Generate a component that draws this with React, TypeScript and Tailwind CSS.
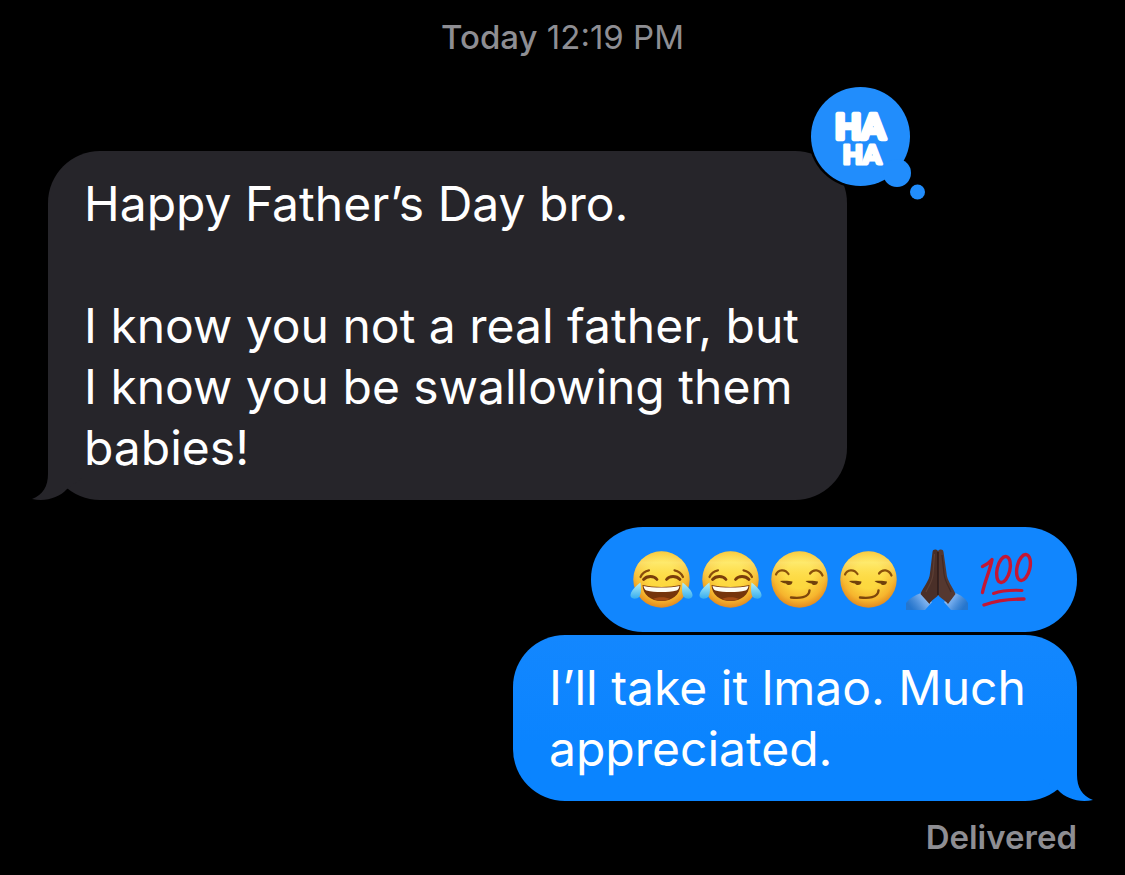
import type { ReactNode } from 'react';
import clsx from 'clsx';

interface BubbleProps {
  side: 'left' | 'right';
  tail?: boolean;
  className?: string;
  children: ReactNode;
}

function Bubble({ side, tail = false, className, children }: BubbleProps) {
  return (
    <div
      className={clsx(
        'relative max-w-full rounded-[52px] px-9 py-[22px] text-5xl leading-[61px] whitespace-pre-line',
        side === 'left' ? 'self-start bg-[#26252a] text-[#26252a]' : 'self-end bg-[#1186fe] text-[#0a84ff]',
        className
      )}
    >
      {tail && (
        <svg
          aria-hidden="true"
          viewBox="0 0 52 56"
          className={clsx('absolute bottom-0 w-[52px] h-14', side === 'left' ? '-left-4' : '-right-4 -scale-x-100')}
        >
          <path d="M16 0V30C16 42 11 51 0 55C13 58 27 54 35 45L50 34V0Z" fill="currentColor" />
        </svg>
      )}
      <div className="relative text-white">{children}</div>
    </div>
  );
}

/* Blue "ha ha" reaction that hangs over the bubble's corner */
function HahaTapback() {
  return (
    <svg
      role="img"
      aria-label="Laughed"
      viewBox="0 0 125 124"
      className="absolute -top-[70px] -right-[83px] w-[125px] h-[124px]"
    >
      <g fill="#000">
        <circle cx="55.5" cy="55.5" r="52" />
        <circle cx="92" cy="92" r="16" />
        <circle cx="112.5" cy="111" r="9" />
      </g>
      <g fill="#218dfc">
        <circle cx="55.5" cy="55.5" r="49.5" />
        <circle cx="92" cy="92" r="14" />
        <circle cx="112.5" cy="111" r="7.5" />
      </g>
      <g
        fill="#fff"
        stroke="#fff"
        strokeLinejoin="round"
        textAnchor="middle"
        className="font-[Lato] font-black"
      >
        <text x="55" y="58" fontSize="34" strokeWidth="4.4">HA</text>
        <text x="57" y="83" fontSize="26" strokeWidth="3.2">HA</text>
      </g>
    </svg>
  );
}

const emojiClass = 'w-[69px] h-[61px]';

function Face({ children, label }: { children: ReactNode; label: string }) {
  return (
    <svg role="img" aria-label={label} viewBox="0 0 69 61" className={emojiClass}>
      <circle cx="34.5" cy="30.5" r="28.2" fill="url(#faceEdge)" />
      <circle cx="34.5" cy="30.5" r="28.2" fill="url(#faceShine)" />
      {children}
    </svg>
  );
}

function JoyEmoji() {
  return (
    <Face label="Face with tears of joy">
      <g fill="none" stroke="#8a4d0c" strokeWidth="2.2" strokeLinecap="round">
        <path d="M13.5 28C15 24.5 18 22 22 21.3" />
        <path d="M47.5 21.3C51.5 22 54.5 24.5 56 28" />
      </g>
      <g fill="none" stroke="#7a3d0a" strokeWidth="2.8" strokeLinecap="round">
        <path d="M16.5 30.5C20 26.5 27 26.5 30 30.5" />
        <path d="M39.5 30.5C42.5 26.5 49.5 26.5 53 30.5" />
      </g>
      <path d="M15.5 36C26 38.5 43 38.5 53.5 36C53 46 45 52 34.5 52S16 46 15.5 36Z" fill="#76350b" />
      <path d="M16.5 37C26 39 43 39 52.5 37C52 39.5 51 41 49.5 41.5C41 43.5 28 43.5 19.5 41.5C18 41 17 39.5 16.5 37Z" fill="#fffdf2" />
      <path d="M26 50C30 47.5 39 47.5 43 50C38 52.3 31 52.3 26 50Z" fill="#a44c14" />
      <path d="M13.5 33.5C8 37.5 3 43 3.5 47C4.5 50.5 10 50.5 12.5 47.5C14.5 44 14 38 13.5 33.5Z" fill="url(#tear)" />
      <path d="M55.5 33.5C61 37.5 66 43 65.5 47C64.5 50.5 59 50.5 56.5 47.5C54.5 44 55 38 55.5 33.5Z" fill="url(#tear)" />
    </Face>
  );
}

function SmirkEmoji() {
  return (
    <Face label="Smirking face">
      <g fill="none" stroke="#8a510b" strokeWidth="2.2" strokeLinecap="round">
        <path d="M11 25.5C13 20.5 20 19.5 23.5 25" />
        <path d="M45 24.5C48.5 19.5 55 20.5 57.5 26.5" />
      </g>
      <g fill="#70400b">
        <path d="M15 32C19 31.5 24 31.5 27.5 32.5C27.5 36 23 37.5 21 34.5C19 34.5 16.5 33.5 15 32Z" />
        <path d="M40.5 32C44.5 31.5 49.5 31.5 53 32.5C53 36 48.5 37.5 46.5 34.5C44.5 34.5 42 33.5 40.5 32Z" />
      </g>
      <path d="M26 48.5C34 49.5 44 49 44.5 41.5" fill="none" stroke="#7d460b" strokeWidth="2.4" strokeLinecap="round" />
    </Face>
  );
}

function PrayEmoji() {
  return (
    <svg role="img" aria-label="Folded hands" viewBox="0 0 69 61" className={emojiClass}>
      <path d="M18 44C12 46 7 49 3 54V61H22L29 53Z" fill="url(#sleeveLeft)" />
      <path d="M52 44C58 46 62 49 65 54V61H48L41 53Z" fill="url(#sleeveRight)" />
      <path d="M35 2C33 0 30 0 29.5 3L27 24C26.5 32 20 38 17.5 45L26.5 55C28 51 33 49.5 35.2 46Z" fill="#4a2f28" />
      <path d="M35 2C37 0 40 0 40.5 3L43.5 24C44 32 50 38 52.5 45L45 55C42 51 37.5 49.5 35.2 46Z" fill="#553830" />
      <path d="M35 3V46" stroke="#2b1815" strokeWidth="1.4" />
      <path d="M31.5 5L30 25C29.5 33 25 38 23 43" fill="none" stroke="#5d3f35" strokeWidth="1.2" />
      <path d="M39 6L41 25C42 33 46 38 48 43" fill="none" stroke="#432a24" strokeWidth="1.2" />
    </svg>
  );
}

function HundredEmoji() {
  return (
    <svg role="img" aria-label="Hundred points" viewBox="0 0 69 61" className={emojiClass}>
      <g fill="none" stroke="#c41735" strokeWidth="3.4" strokeLinecap="round" strokeLinejoin="round">
        <path d="M10.5 17.5C14 16 17.5 13.5 20 10.5C18 22 13 31 10.5 43.5" />
        <ellipse cx="31.5" cy="20.5" rx="6.4" ry="13.2" transform="rotate(13 31.5 20.5)" />
        <ellipse cx="51.5" cy="18.5" rx="6.4" ry="13.2" transform="rotate(13 51.5 18.5)" />
        <path d="M21.5 44.5C30 41.5 40 41 50 41.5" strokeWidth="3" />
        <path d="M12 56C24 51.5 38 50 52 50" />
      </g>
    </svg>
  );
}

/* Gradients shared by all the emoji */
function EmojiGradients() {
  return (
    <svg aria-hidden="true" className="absolute size-0">
      <defs>
        <radialGradient id="faceEdge" cx="50%" cy="42%" r="60%">
          <stop offset="0.4" stopColor="#fdd83f" />
          <stop offset="0.75" stopColor="#f6b52e" />
          <stop offset="1" stopColor="#df821c" />
        </radialGradient>
        <linearGradient id="faceShine" x1="0" y1="0" x2="0" y2="1">
          <stop offset="0" stopColor="#fff06a" stopOpacity="0.3" />
          <stop offset="0.2" stopColor="#fff58a" stopOpacity="0.6" />
          <stop offset="0.6" stopColor="#ffe04a" stopOpacity="0" />
        </linearGradient>
        <linearGradient id="tear" x1="0" y1="0" x2="0" y2="1">
          <stop offset="0" stopColor="#b5f0f5" />
          <stop offset="1" stopColor="#35adf0" />
        </linearGradient>
        <linearGradient id="sleeveLeft" x1="1" y1="0" x2="0" y2="0.5">
          <stop offset="0" stopColor="#b9d3f2" />
          <stop offset="0.5" stopColor="#6ba6ea" />
          <stop offset="1" stopColor="#2f6fb8" stopOpacity="0.7" />
        </linearGradient>
        <linearGradient id="sleeveRight" x1="0" y1="0" x2="1" y2="0.5">
          <stop offset="0" stopColor="#b9d3f2" />
          <stop offset="0.5" stopColor="#6ba6ea" />
          <stop offset="1" stopColor="#2f6fb8" stopOpacity="0.7" />
        </linearGradient>
      </defs>
    </svg>
  );
}

export default function App() {
  return (
    <main className="min-h-screen bg-black px-12 pt-[17px] pb-4 font-[Inter,sans-serif] text-[33px] leading-10 text-[#8e8e93]">
      <EmojiGradients />
      <p className="text-center">
        <span className="font-medium">Today</span> 12:19 PM
      </p>

      <div className="mt-[94px] flex flex-col">
        <Bubble side="left" tail className="w-[799px]">
          {'Happy Father’s Day bro.\n\nI know you not a real father, but\nI know you be swallowing them\nbabies!'}
          <span className="absolute -top-[22px] -right-9">
            <HahaTapback />
          </span>
        </Bubble>

        <Bubble side="right" className="mt-[27px]">
          <div className="flex">
            <JoyEmoji />
            <JoyEmoji />
            <SmirkEmoji />
            <SmirkEmoji />
            <PrayEmoji />
            <HundredEmoji />
          </div>
        </Bubble>

        <Bubble side="right" tail className="mt-[3px] w-[564px] bg-linear-to-b from-[#1387fe] to-[#0a84ff] to-65%">
          {'I’ll take it lmao. Much\nappreciated.'}
        </Bubble>
      </div>

      <p className="mt-4 text-right font-semibold">Delivered</p>
    </main>
  );
}
